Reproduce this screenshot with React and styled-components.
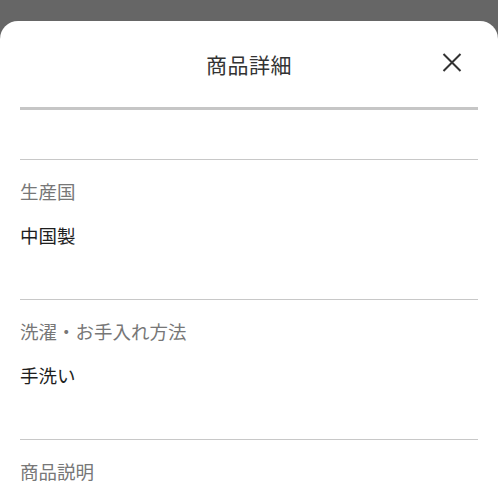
import React from "react";
import styled, { createGlobalStyle } from "styled-components";

const GlobalStyle = createGlobalStyle`
  html, body {
    margin: 0;
    padding: 0;
    background: #666666;
    font-family: "Noto Sans CJK JP", "Noto Sans", sans-serif;
    overflow: hidden;
  }
`;

const Sheet = styled.div`
  margin-top: 21px;
  min-height: 560px;
  background: #ffffff;
  border-radius: 18px 18px 0 0;
  padding: 0 20px;
`;

const Header = styled.header`
  height: 86px;
  display: grid;
  grid-template-columns: 1fr auto 1fr;
  align-items: center;
  border-bottom: 3px solid #c6c6c6;
`;

const Title = styled.h1`
  grid-column: 2;
  margin: 0;
  font-size: 21px;
  font-weight: 400;
  color: #333333;
  line-height: 1;
  letter-spacing: 0.5px;
`;

const CloseButton = styled.button`
  grid-column: 3;
  justify-self: end;
  margin-right: 16px;
  margin-top: -4px;
  border: none;
  background: none;
  padding: 0;
  width: 20px;
  height: 20px;
  display: flex;
  align-items: center;
  justify-content: center;
  cursor: pointer;
`;

const Spacer = styled.div`
  height: 49px;
`;

const Section = styled.section`
  border-top: 1px solid #c8c8c8;
  padding: 18px 0 51px;
  display: flex;
  flex-direction: column;
  gap: 18px;
`;

const Label = styled.div`
  font-size: 18.5px;
  line-height: 26px;
  color: #777777;
`;

const Value = styled.div`
  font-size: 18.5px;
  line-height: 26px;
  color: #1e1e1e;
`;

const details = [
  { label: "生産国", value: "中国製" },
  { label: "洗濯・お手入れ方法", value: "手洗い" },
  { label: "商品説明", value: "" },
];

export default function App() {
  return (
    <>
      <GlobalStyle />
      <Sheet>
        <Header>
          <Title>商品詳細</Title>
          <CloseButton aria-label="閉じる">
            <svg width="20" height="19" viewBox="0 0 20 19">
              <path d="M1.5 1 L18.5 18 M18.5 1 L1.5 18" stroke="#333" strokeWidth="2" fill="none" />
            </svg>
          </CloseButton>
        </Header>
        <Spacer />
        {details.map((d) => (
          <Section key={d.label}>
            <Label>{d.label}</Label>
            {d.value && <Value>{d.value}</Value>}
          </Section>
        ))}
      </Sheet>
    </>
  );
}
